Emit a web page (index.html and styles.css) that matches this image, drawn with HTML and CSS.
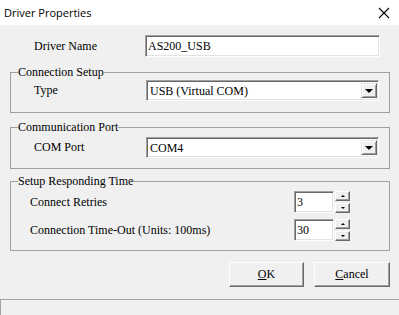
FILE: index.html
```html
<!DOCTYPE html>
<html lang="en">

<head>
    <meta charset="UTF-8">
    <title>Driver Properties</title>
    <link rel="stylesheet" href="styles.css">
</head>

<body>
    <div class="window">
        <div class="titlebar">
            <span class="title">Driver Properties</span>
            <svg class="close" width="12" height="12" viewBox="0 0 12 12">
                <path d="M1 1 L11 11 M11 1 L1 11" stroke="#000" stroke-width="1.1" fill="none" />
            </svg>
        </div>

        <div class="content">
            <div class="row name-row">
                <label class="label">Driver Name</label>
                <div class="edit">AS200_USB</div>
            </div>

            <fieldset class="group group1">
                <legend>Connection Setup</legend>
                <div class="row">
                    <label class="label">Type</label>
                    <div class="combo">
                        <span class="combo-text">USB (Virtual COM)</span>
                        <span class="drop"><i class="arrow"></i></span>
                    </div>
                </div>
            </fieldset>

            <fieldset class="group group2">
                <legend>Communication Port</legend>
                <div class="row">
                    <label class="label">COM Port</label>
                    <div class="combo">
                        <span class="combo-text">COM4</span>
                        <span class="drop"><i class="arrow"></i></span>
                    </div>
                </div>
            </fieldset>

            <fieldset class="group group3">
                <legend>Setup Responding Time</legend>
                <div class="spin-row">
                    <label class="label">Connect Retries</label>
                    <div class="spinner">
                        <div class="spin-edit">3</div>
                        <div class="spin-btns">
                            <span class="spin-btn"><i class="tri-up"></i></span>
                            <span class="spin-btn"><i class="tri-down"></i></span>
                        </div>
                    </div>
                </div>
                <div class="spin-row">
                    <label class="label">Connection Time-Out (Units: 100ms)</label>
                    <div class="spinner">
                        <div class="spin-edit">30</div>
                        <div class="spin-btns">
                            <span class="spin-btn"><i class="tri-up"></i></span>
                            <span class="spin-btn"><i class="tri-down"></i></span>
                        </div>
                    </div>
                </div>
            </fieldset>

            <div class="buttons">
                <button class="btn btn-ok"><u>O</u>K</button>
                <button class="btn"><u>C</u>ancel</button>
            </div>
        </div>

        <div class="statusbar"></div>
    </div>
</body>

</html>
```

FILE: styles.css
```css
html,
body {
    margin: 0;
    padding: 0;
    background: #f0f0f0;
}

.window {
    width: 399px;
    height: 315px;
    overflow: hidden;
    display: flex;
    flex-direction: column;
    font-family: "Liberation Serif", "Tinos", "Noto Serif", "DejaVu Serif", serif;
    font-size: 12px;
    color: #000;
}

.titlebar {
    height: 25px;
    background: #fff;
    display: flex;
    align-items: center;
    justify-content: space-between;
    padding: 0 9px 0 4px;
}

.title {
    font-family: "Open Sans", "Noto Sans", sans-serif;
    font-size: 11px;
    color: #000;
}

.close {
    display: block;
}

.content {
    padding: 10px 9px 0 10px;
    display: flex;
    flex-direction: column;
}

.row {
    display: grid;
    grid-template-columns: 112px 1fr;
    align-items: center;
    padding-left: 16px;
}

.name-row {
    grid-template-columns: 111px 1fr;
    padding-left: 24px;
    padding-right: 10px;
}

.label {
    white-space: nowrap;
}

/* sunken edit boxes */
.edit,
.combo,
.spin-edit {
    box-sizing: border-box;
    background: #fff;
    border: 1px solid;
    border-color: #a0a0a0 #fff #fff #a0a0a0;
    box-shadow: inset 1px 1px #696969, inset -1px -1px #e3e3e3;
}

.edit {
    height: 22px;
    line-height: 20px;
    padding-left: 2px;
}

.group {
    margin: 0;
    border: 1px solid #a0a0a0;
    padding: 0 10px 0 7px;
}

.group legend {
    padding: 0;
    line-height: 15px;
}

.group1 {
    margin-top: 8px;
    padding-bottom: 11px;
}

.group2 {
    margin-top: 7px;
    padding-top: 2px;
    padding-bottom: 10px;
}

.group3 {
    margin-top: 5px;
    padding: 2px 39px 9px 7px;
    display: flex;
    flex-direction: column;
    gap: 6px;
}

.combo {
    height: 21px;
    display: flex;
    align-items: stretch;
    padding: 2px 1px 2px 3px;
}

.combo-text {
    flex: 1;
    line-height: 17px;
}

.drop {
    width: 16px;
    box-sizing: border-box;
    background: #f0f0f0;
    border: 1px solid;
    border-color: #e3e3e3 #696969 #696969 #e3e3e3;
    box-shadow: inset 1px 1px #fff, inset -1px -1px #a0a0a0;
    display: flex;
    align-items: center;
    justify-content: center;
}

.arrow {
    width: 0;
    height: 0;
    border-left: 4px solid transparent;
    border-right: 4px solid transparent;
    border-top: 4px solid #000;
}

.spin-row {
    display: flex;
    align-items: center;
    justify-content: space-between;
    height: 22px;
    padding-left: 12px;
}

.spinner {
    display: flex;
    gap: 1px;
}

.spin-edit {
    width: 40px;
    height: 22px;
    line-height: 20px;
    padding-left: 2px;
}

.spin-btns {
    display: flex;
    flex-direction: column;
    justify-content: space-between;
    height: 22px;
}

.spin-btn {
    width: 15px;
    height: 10px;
    box-sizing: border-box;
    background: #f0f0f0;
    border: 1px solid;
    border-color: #fff #696969 #696969 #fff;
    box-shadow: inset -1px -1px #a0a0a0;
    display: flex;
    align-items: center;
    justify-content: center;
}

.tri-up,
.tri-down {
    width: 0;
    height: 0;
    border-left: 2px solid transparent;
    border-right: 2px solid transparent;
}

.tri-up {
    border-bottom: 2px solid #000;
}

.tri-down {
    border-top: 2px solid #000;
}

.buttons {
    display: flex;
    justify-content: flex-end;
    gap: 10px;
    margin-top: 11px;
}

.btn {
    width: 76px;
    height: 25px;
    box-sizing: border-box;
    background: #f0f0f0;
    font-family: "Liberation Serif", "Tinos", "Noto Serif", "DejaVu Serif", serif;
    font-size: 12px;
    color: #000;
    border: 1px solid;
    border-color: #fff #696969 #696969 #fff;
    box-shadow: inset -1px -1px #a0a0a0;
    padding: 0;
}

.btn-ok {
    width: 75px;
}

.statusbar {
    margin-top: 12px;
    flex: 1;
    border-top: 1px solid #a0a0a0;
    border-left: 1px solid #a0a0a0;
}
```
